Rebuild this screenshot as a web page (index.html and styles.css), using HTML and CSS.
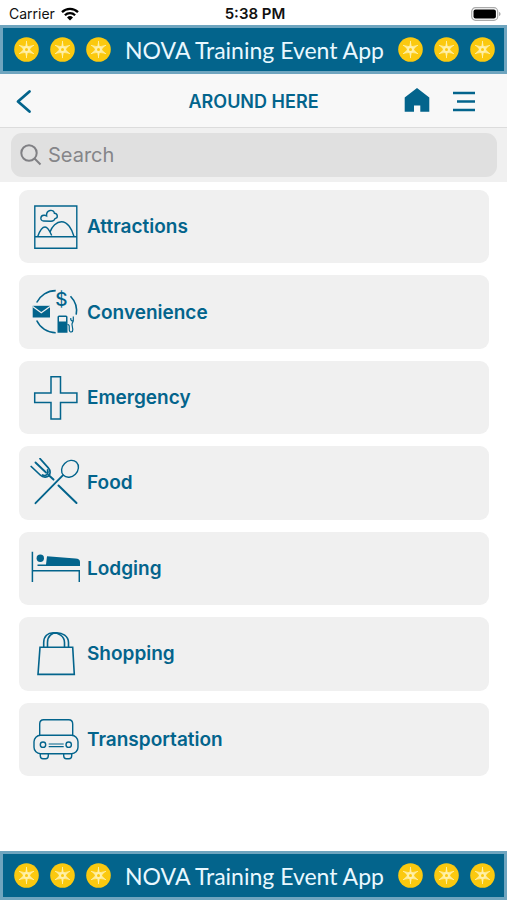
FILE: index.html
```html
<!DOCTYPE html>
<html lang="en">
<head>
<meta charset="utf-8">
<meta name="viewport" content="width=device-width, initial-scale=1">
<title>Around Here</title>
<link rel="stylesheet" href="styles.css">
</head>
<body>
<svg class="sprite" aria-hidden="true">
  <symbol id="coin" viewBox="0 0 25 25">
    <circle cx="12.500" cy="12.500" r="12.300" fill="#fbc90f"/>
    <path fill="#fff0a8" d="M12.500 3.500l1.300 5.700 5.500-1.200-3.300 4.500 3.800 4.200-6-.8-1.300 5.600-1.300-5.600-6 .8L9 12.500 5.700 8l5.500 1.200z" opacity=".75"/>
    <path d="M12.500 4v17M5 8.200l15 8.600M5 16.800l15-8.600" stroke="#fff0a8" stroke-width=".9" fill="none"/>
    <circle cx="12.500" cy="12.500" r="3.400" fill="#fff0a8"/>
    <circle cx="12.500" cy="12.500" r="1.500" fill="#fbc90f"/>
  </symbol>
</svg>

<div class="status">
  <div class="carrier">
    <span>Carrier</span>
    <svg class="wifi" viewBox="0 0 18 14" aria-hidden="true">
      <path d="M1 5.200a11.500 11.500 0 0 1 16 0M3.900 8.200a7.300 7.300 0 0 1 10.200 0" fill="none" stroke="#000" stroke-width="2.300"/>
      <path d="M9 13.500l-3-3a4.300 4.300 0 0 1 6 0z"/>
    </svg>
  </div>
  <time>5:38 PM</time>
  <svg class="battery" viewBox="0 0 30 14" aria-hidden="true">
    <rect x=".7" y=".7" width="26" height="12.600" rx="3.800" fill="#fff" stroke="#aaa" stroke-width="1.200"/>
    <rect x="2.500" y="2.500" width="22.400" height="9" rx="2"/>
    <path d="M28 5c2 .6 2 3.400 0 4z" fill="#aaa"/>
  </svg>
</div>

<div class="banner">
  <div class="coins"><svg><use href="#coin"/></svg><svg><use href="#coin"/></svg><svg><use href="#coin"/></svg></div>
  <span>NOVA Training Event App</span>
  <div class="coins"><svg><use href="#coin"/></svg><svg><use href="#coin"/></svg><svg><use href="#coin"/></svg></div>
</div>

<header class="nav">
  <button class="nav-button back" type="button" aria-label="Back">
    <svg viewBox="0 0 26 26"><path d="M17.500 2.500L6 12.500l11.500 10" stroke-width="2.800" stroke-linecap="round" stroke-linejoin="round"/></svg>
  </button>
  <h1>AROUND HERE</h1>
  <div class="actions">
    <button class="nav-button" type="button" aria-label="Home">
      <svg viewBox="0 0 26 26"><path d="M13-1l12.300 9.500V22.800h-9V16.500H10v6.300H.7V8.500z" class="solid"/></svg>
    </button>
    <button class="nav-button" type="button" aria-label="Menu">
      <svg viewBox="0 0 26 26"><path d="M2 4h22M6 12.500h18M2 21h22" stroke-width="2.300"/></svg>
    </button>
  </div>
</header>

<form class="search" role="search">
  <label class="field">
    <svg viewBox="0 0 22 22" aria-hidden="true"><circle cx="9" cy="9" r="7.700"/><path d="M14.500 14.500l6 6"/></svg>
    <input type="search" placeholder="Search" aria-label="Search">
  </label>
</form>

<main class="list">
  <a class="card" href="#attractions">
    <svg viewBox="0 0 50 50" aria-hidden="true">
      <path d="M4.800 4h42v42.300h-42zM4.800 34.800h42"/>
      <path d="M13.500 19C10 19 9.800 13.600 13.800 13.300C15 13.200 15.800 13.300 16.600 13.800C16 7.500 24 6.800 24.400 11.300C28 11.500 28.300 16.200 25 16.600C24.500 18.500 23 19.200 21 19.200Z"/>
      <path d="M7.700 34.500C9.500 29.500 12 25 15 25S20 29.500 21.700 33.500"/>
      <path d="M20 30C22 24.500 26.500 19.700 31.500 19.700C37.500 19.700 42 27 44 34.500"/>
    </svg>
    <span>Attractions</span>
  </a>
  <a class="card" href="#convenience">
    <svg viewBox="0 0 50 50" aria-hidden="true">
      <path d="M25.700 3.600A21.300 21.300 0 0 0 6.700 15.500M6.700 33.500a21.300 21.300 0 0 0 19 12.300M40.500 9.200a21.300 21.300 0 0 1 5.700 18.500" stroke-width="1.600"/>
      <path class="solid" d="M2.700 18.800H20v11.700H2.700z"/>
      <path d="M2.700 19.500l8.600 6.300 8.700-6.300" stroke="#f0f0f0" stroke-width="1.200"/>
      <text x="31.300" y="19" text-anchor="middle">$</text>
      <path class="solid" d="M27.500 45.800V30a1.500 1.500 0 0 1 1.500-1.500h7a1.500 1.500 0 0 1 1.500 1.500v15.800z"/>
      <path class="cutout" d="M29 30h7v4.500h-7z"/>
      <path d="M37.500 37.500C40 37.500 39 40.500 39.300 43C39.700 46 43 45.500 42.800 42.500L42 37.500C41.800 36 43.300 35 43.300 33.500V29.500M43.300 34C41 34 40.500 32.500 40.800 31" stroke-width="1.200"/>
    </svg>
    <span>Convenience</span>
  </a>
  <a class="card" href="#emergency">
    <svg viewBox="0 0 50 50" aria-hidden="true">
      <path d="M21 3.700h9.500v16.200h16.400v9.700H30.500V46H21V29.600H4.700v-9.700H21z" stroke-width="1.500"/>
    </svg>
    <span>Emergency</span>
  </a>
  <a class="card" href="#food">
    <svg viewBox="0 0 50 50" aria-hidden="true">
      <g stroke-linecap="round">
        <ellipse cx="40" cy="10.800" rx="9.200" ry="7.600" transform="rotate(-45 40 10.800)"/>
        <path d="M32.800 17.300L5.500 45.200" stroke-width="1.900"/>
        <path d="M1.200 8.500l9 8.500c3 3 7 2.400 8.500.9s2.300-5-.4-8L10 .6" stroke-width="1.700"/>
        <path d="M5.500 4.500l10.500 10" stroke-width="1.900"/>
        <path d="M12.500 17c2 1 3.500.5 4.500-.5s1.300-2.500.5-4.500" stroke-width="1.700"/>
        <path d="M18.500 17l5 4.600M28.500 27.500l18 17.500" stroke-width="2"/>
      </g>
    </svg>
    <span>Food</span>
  </a>
  <a class="card" href="#lodging">
    <svg viewBox="0 0 50 50" aria-hidden="true">
      <circle class="solid" cx="10.300" cy="15.200" r="3.700"/>
      <path class="solid" d="M17 13.300l28.500 2.200c3 .3 4.500 1.300 4.500 3.500v4H7.500v-1.400H16z"/>
      <path d="M2.400 8.700V39M2.400 27.800h47M49.300 27.100V39" stroke-width="1.500"/>
    </svg>
    <span>Lodging</span>
  </a>
  <a class="card" href="#shopping">
    <svg viewBox="0 0 50 50" aria-hidden="true">
      <path d="M10 18.200h32.700l1.600 27.200H8z" stroke-width="1.600"/>
      <path d="M13.700 18v-4.500C13.700 7 18 3.800 23 3.800S34.500 7 34.500 13.500V18M17.500 18v-4.500C17.500 7 22 3.800 27 3.800S38.500 7 38.500 13.500V18" stroke-width="1.600"/>
    </svg>
    <span>Shopping</span>
  </a>
  <a class="card" href="#transportation">
    <svg viewBox="0 0 50 50" aria-hidden="true">
      <path d="M9.700 21.300V10c0-2.800 1.300-4.200 4-4.200h25c2.700 0 4 1.400 4 4.200v11.300"/>
      <rect x="4" y="21.300" width="44" height="18.400" rx="6.500"/>
      <circle cx="13" cy="30.700" r="2.700"/><circle cx="38.700" cy="30.700" r="2.700"/>
      <path d="M18.700 30h15M18.700 32.600h15" stroke-width="1.200"/>
      <path d="M10.300 39.700v2c0 2 1 3 2.700 3h2.600c1.700 0 2.700-1 2.700-3v-2M33.700 39.700v2c0 2 1 3 2.700 3H39c1.700 0 2.700-1 2.700-3v-2"/>
    </svg>
    <span>Transportation</span>
  </a>
</main>

<div class="banner">
  <div class="coins"><svg><use href="#coin"/></svg><svg><use href="#coin"/></svg><svg><use href="#coin"/></svg></div>
  <span>NOVA Training Event App</span>
  <div class="coins"><svg><use href="#coin"/></svg><svg><use href="#coin"/></svg><svg><use href="#coin"/></svg></div>
</div>
</body>
</html>
```
FILE: styles.css
```css
* {
  box-sizing: border-box;
}

body {
  --blue: #03648c;
  margin: 0;
  min-height: 100vh;
  display: flex;
  flex-direction: column;
  background: #fff;
  color: var(--blue);
  font-family: Inter, "Liberation Sans", sans-serif;
}

svg {
  display: block;
  flex: none;
}

.sprite {
  display: none;
}

.status {
  display: grid;
  grid-template-columns: 1fr auto 1fr;
  align-items: center;
  height: 25px;
  padding: 2px 6px 0 9px;
  color: #111;
  font-size: 14px;
}

.status time {
  font-size: 15px;
  font-weight: 600;
}

.carrier {
  display: flex;
  align-items: center;
  gap: 6px;
}

.wifi {
  width: 18px;
  height: 14px;
}

.battery {
  width: 30px;
  height: 14px;
  justify-self: end;
}

.banner {
  display: flex;
  align-items: center;
  justify-content: space-between;
  height: 49px;
  padding: 0 9px 0 11px;
  border: 3px solid #6fa5bf;
  background: var(--blue);
  color: #e9f8ff;
  font-family: Lato, sans-serif;
  font-size: 23px;
  white-space: nowrap;
}

.coins {
  display: flex;
  gap: 11px;
}

.coins svg {
  width: 25px;
  height: 25px;
}

.nav {
  display: grid;
  grid-template-columns: 1fr auto 1fr;
  align-items: center;
  height: 54px;
  padding: 2px 30px 0 12px;
  border-bottom: 1px solid #dcdcdc;
  background: #f8f8f8;
}

.nav h1 {
  margin: 0;
  padding-left: 18px;
  font-size: 18px;
  font-weight: 600;
}

.nav-button {
  padding: 0;
  border: 0;
  background: none;
  color: inherit;
}

.nav-button svg {
  width: 26px;
  height: 26px;
  overflow: visible;
  fill: none;
  stroke: currentColor;
}

.nav-button .solid,
.card .solid {
  fill: currentColor;
  stroke: none;
}

.back {
  justify-self: start;
}

.actions {
  display: flex;
  justify-content: flex-end;
  gap: 21px;
}

.search {
  padding: 5px 10px 5px 11px;
  background: #f0f0f0;
}

.field {
  display: flex;
  align-items: center;
  gap: 6px;
  height: 44px;
  padding: 0 9px;
  border-radius: 11px;
  background: #e0e0e0;
}

.field svg {
  width: 22px;
  height: 22px;
  fill: none;
  stroke: #808084;
  stroke-width: 2;
}

.field input {
  flex: 1;
  min-width: 0;
  padding: 0;
  border: 0;
  outline: 0;
  background: none;
  font: inherit;
  font-size: 20px;
}

.field input::placeholder {
  color: #858589;
}

.list {
  flex: 1;
  display: grid;
  grid-auto-rows: 1fr;
  gap: 12px;
  padding: 8px 18px 75px 19px;
}

.card {
  display: flex;
  align-items: center;
  gap: 7px;
  padding: 0 11px;
  border-radius: 9px;
  background: #f0f0f0;
  color: inherit;
  font-size: 19px;
  font-weight: 600;
  text-decoration: none;
}

.card svg {
  width: 50px;
  height: 50px;
  fill: none;
  stroke: currentColor;
  stroke-width: 1.4;
}

.card .cutout {
  fill: #f0f0f0;
  stroke: none;
}

.card text {
  fill: currentColor;
  stroke: none;
  font-size: 19px;
  font-weight: 500;
}
```
